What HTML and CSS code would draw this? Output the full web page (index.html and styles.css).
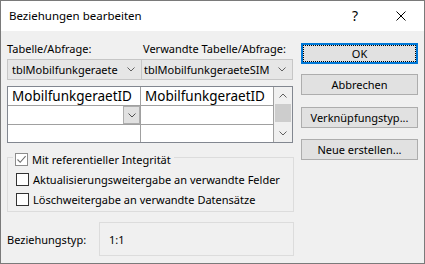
FILE: index.html
```html
<!DOCTYPE html>
<html lang="de">
<head>
<meta charset="utf-8">
<title>Beziehungen bearbeiten</title>
<link rel="stylesheet" href="styles.css">
</head>
<body>
<div class="window">
  <div class="titlebar">
    <span class="title">Beziehungen bearbeiten</span>
    <span class="tb-btn tb-help">?</span>
    <span class="tb-btn tb-close">
      <svg width="10" height="10" viewBox="0 0 10 10"><path d="M0.5 0.5 L9.5 9.5 M9.5 0.5 L0.5 9.5" stroke="#000" stroke-width="1" fill="none"/></svg>
    </span>
  </div>
  <div class="content">
    <div class="left">
      <div class="pair labels">
        <span class="lbl">Tabelle/Abfrage:</span>
        <span class="lbl lbl2">Verwandte Tabelle/Abfrage:</span>
      </div>
      <div class="pair combos">
        <div class="combo combo1">
          <span class="combo-text">tblMobilfunkgeraete</span>
          <svg class="chev" width="8" height="5" viewBox="0 0 8 5"><path d="M0.5 0.5 L4 4 L7.5 0.5" stroke="#606060" fill="none"/></svg>
        </div>
        <div class="combo combo2">
          <span class="combo-text">tblMobilfunkgeraeteSIM</span>
          <svg class="chev" width="8" height="5" viewBox="0 0 8 5"><path d="M0.5 0.5 L4 4 L7.5 0.5" stroke="#606060" fill="none"/></svg>
        </div>
      </div>
      <div class="fields">
        <div class="cells">
          <div class="cell r1">MobilfunkgeraetID</div>
          <div class="cell r1 c2">MobilfunkgeraetID</div>
          <div class="cell r2 active">
            <span class="cell-drop">
              <svg width="8" height="5" viewBox="0 0 8 5"><path d="M0.5 0.5 L4 4 L7.5 0.5" stroke="#505050" fill="none"/></svg>
            </span>
          </div>
          <div class="cell r2 c2"></div>
          <div class="cell r3"></div>
          <div class="cell r3 c2"></div>
        </div>
        <div class="scrollbar">
          <div class="sb-arrow">
            <svg width="8" height="5" viewBox="0 0 8 5"><path d="M0.5 4.5 L4 1 L7.5 4.5" stroke="#606060" fill="none"/></svg>
          </div>
          <div class="sb-thumb"></div>
          <div class="sb-space"></div>
          <div class="sb-arrow">
            <svg width="8" height="5" viewBox="0 0 8 5"><path d="M0.5 0.5 L4 4 L7.5 0.5" stroke="#606060" fill="none"/></svg>
          </div>
        </div>
      </div>
      <div class="group">
        <div class="check-row header">
          <span class="box checked">
            <svg width="11" height="11" viewBox="0 0 11 11"><path d="M1.5 5.5 L4.2 8.3 L9.6 2.2" stroke="#6f6f6f" stroke-width="1.1" fill="none"/></svg>
          </span>
          <span class="check-label">Mit referentieller Integrität</span>
        </div>
        <div class="check-row">
          <span class="box"></span>
          <span class="check-label">Aktualisierungsweitergabe an verwandte Felder</span>
        </div>
        <div class="check-row">
          <span class="box"></span>
          <span class="check-label">Löschweitergabe an verwandte Datensätze</span>
        </div>
      </div>
      <div class="reltype">
        <span class="rel-label">Beziehungstyp:</span>
        <div class="rel-box">1:1</div>
      </div>
    </div>
    <div class="right">
      <button class="btn btn-ok"><span class="focus">OK</span></button>
      <button class="btn b2">Abbrechen</button>
      <button class="btn b3">Verknüpfungstyp...</button>
      <button class="btn b4">Neue erstellen...</button>
    </div>
  </div>
</div>
</body>
</html>
```

FILE: styles.css
```css
* { box-sizing: border-box; }
html, body { margin: 0; padding: 0; }
body {
  font-family: "Noto Sans", "Open Sans", sans-serif;
  font-size: 11px;
  color: #000;
  background: #f0f0f0;
}
.window {
  width: 425px;
  height: 264px;
  border: 1px solid #7a7a7a;
  background: #f0f0f0;
  display: flex;
  flex-direction: column;
}
.titlebar {
  height: 30px;
  background: #fff;
  display: flex;
  align-items: center;
  flex: none;
}
.title {
  padding-left: 8px;
  font-size: 11.5px;
  padding-bottom: 1px;
}
.tb-btn {
  width: 46px;
  height: 30px;
  display: flex;
  align-items: center;
  justify-content: center;
}
.tb-help {
  margin-left: auto;
  font-size: 14px;
  padding-bottom: 1px;
}
.content {
  flex: 1;
  display: flex;
  gap: 7px;
  padding: 10px 6px 0 6px;
}
.left {
  width: 287px;
  display: flex;
  flex-direction: column;
}
.pair {
  display: grid;
  grid-template-columns: 135px 151px;
}
.labels {
  height: 16px;
  line-height: 16px;
  white-space: nowrap;
}
.lbl2 { padding-left: 1px; }
.combos {
  margin-top: 2px;
  height: 21px;
}
.combo {
  border: 1px solid #c6c6c6;
  background: #e6e6e6;
  display: flex;
  align-items: center;
  padding: 0 4px 0 4px;
}
.combo2 { border-left: none; padding-left: 2px; }
.combo-text { flex: 1; white-space: nowrap; overflow: hidden; }
.chev { flex: none; margin-right: 2px; }
.fields {
  margin-top: 6px;
  width: 286px;
  height: 57px;
  border: 1px solid #828790;
  background: #fff;
  display: flex;
}
.cells {
  display: grid;
  grid-template-columns: 133px 133px;
  grid-template-rows: 19px 19px 17px;
}
.cell {
  border-right: 1px solid #a0a0a0;
  border-bottom: 1px solid #a0a0a0;
  font-size: 13.5px;
  line-height: 18px;
  padding-left: 4px;
  white-space: nowrap;
  overflow: hidden;
}
.cell.c2 { padding-left: 4px; }
.cell.r3 { border-bottom: none; }
.cell.active {
  display: flex;
  justify-content: flex-end;
  align-items: stretch;
}
.cell-drop {
  width: 17px;
  border: 1px solid #adadad;
  background: #e1e1e1;
  display: flex;
  align-items: center;
  justify-content: center;
}
.scrollbar {
  width: 18px;
  background: #f0f0f0;
  display: flex;
  flex-direction: column;
}
.sb-arrow {
  height: 17px;
  display: flex;
  align-items: center;
  justify-content: center;
}
.sb-thumb {
  height: 18px;
  margin: 0 1px;
  background: #cdcdcd;
}
.sb-space { flex: 1; }
.group {
  margin-top: 14px;
  height: 55px;
  border: 1px solid #dcdcdc;
  padding-bottom: 2px;
}
.check-row {
  height: 20px;
  display: flex;
  align-items: center;
  padding-left: 8px;
  gap: 4px;
}
.check-row.header {
  margin-top: -9px;
  margin-left: 5px;
  padding-left: 2px;
  padding-right: 3px;
  width: fit-content;
  background: #f0f0f0;
}
.box {
  width: 13px;
  height: 13px;
  border: 1px solid #333;
  background: #fff;
  flex: none;
  display: flex;
  align-items: center;
  justify-content: center;
}
.box.checked { border-color: #8c8c8c; }
.check-label { white-space: nowrap; }
.reltype {
  margin-top: 10px;
  display: flex;
  align-items: center;
  height: 34px;
}
.rel-label { width: 92px; flex: none; }
.rel-box {
  flex: 1;
  height: 34px;
  border: 1px solid #dcdcdc;
  padding-left: 9px;
  display: flex;
  align-items: center;
}
.right {
  width: 117px;
  padding-top: 2px;
  display: flex;
  flex-direction: column;
}
.btn {
  font-family: inherit;
  font-size: 11px;
  color: #000;
  height: 21px;
  width: 117px;
  border: 1px solid #adadad;
  background: #e1e1e1;
  padding: 0;
  margin: 0;
  display: flex;
  align-items: center;
  justify-content: center;
}
.btn-ok {
  border: 2px solid #0078d7;
  padding: 0;
}
.btn-ok .focus {
  width: 100%;
  height: 100%;
  border: 1px dotted #000;
  display: flex;
  align-items: center;
  justify-content: center;
}
.b2 { margin-top: 10px; }
.b3 { margin-top: 12px; }
.b4 { margin-top: 11px; }
```
